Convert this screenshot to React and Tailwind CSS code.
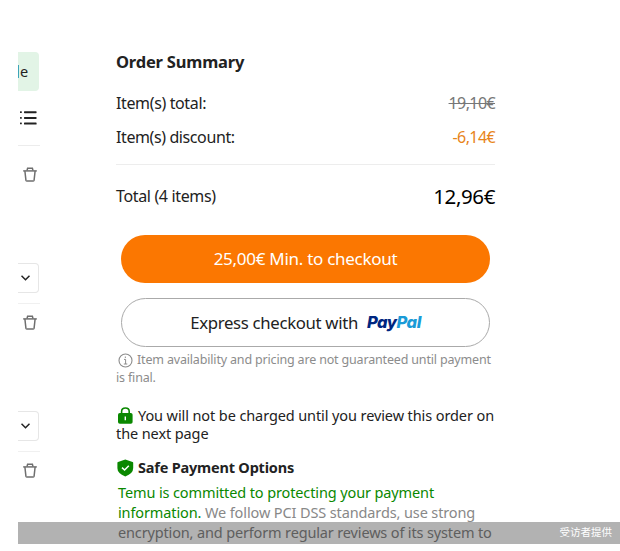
import React from 'react';

const cartRows = [
  { id: 1, gap: 'h-[81px]' },
  { id: 2, gap: 'h-[81px]' },
];

function TrashIcon() {
  return (
    <svg className="ml-[5px] block h-[15px] w-[14px]" viewBox="0 0 14 15" fill="none" stroke="#6f6f6f" strokeWidth="1.5">
      <path d="M0.2 3.9H13.8" />
      <path d="M4 3.6L4.6 1.2H9.4L10 3.6" />
      <path d="M1.9 4L2.9 13.2Q3 13.9 3.7 13.9H10.3Q11 13.9 11.1 13.2L12.1 4" />
    </svg>
  );
}

function ListIcon() {
  return (
    <svg className="ml-[2px] block h-[14px] w-[17px]" viewBox="0 0 17 14" fill="#222">
      {[0.2, 5.9, 11.5].map((y) => (
        <g key={y}>
          <rect x="0" y={y} width="1.8" height="1.8" rx="0.5" />
          <rect x="4" y={y} width="12.6" height="2" rx="0.6" />
        </g>
      ))}
    </svg>
  );
}

function QuantitySelect() {
  return (
    <div className="flex h-[30px] w-[21px] items-center rounded-r-[4px] border border-l-0 border-[#e6e6e6] pl-[3px]">
      <svg className="h-[6px] w-[9px]" viewBox="0 0 9 6" fill="none" stroke="#222" strokeWidth="1.5">
        <path d="M0.5 0.7L4.5 4.7L8.5 0.7" />
      </svg>
    </div>
  );
}

function CartEdge() {
  return (
    <div className="flex w-[22px] flex-col overflow-hidden pt-[52px]">
      <div className="flex h-[39px] w-[21px] items-center rounded-r-[4px] bg-[#e2f4e6] text-[14.5px] text-[#222]">
        <span className="h-[13px] w-[1px] bg-[#3da5b8]" />
        <span className="ml-[1px]">e</span>
      </div>
      <div className="h-[20px]" />
      <ListIcon />
      <div className="mt-[20px] h-px bg-[#ececec]" />
      <div className="h-[21px]" />
      <TrashIcon />
      {cartRows.map((row) => (
        <div key={row.id}>
          <div className={row.gap} />
          <QuantitySelect />
          <div className="mt-[10px] mb-[11px] h-px bg-[#f0f0f0]" />
          <TrashIcon />
        </div>
      ))}
    </div>
  );
}

function InfoIcon() {
  return (
    <svg className="mr-[4px] ml-[2px] h-[15px] w-[15px] shrink-0" viewBox="0 0 15 15" fill="none" stroke="#8c8c8c">
      <circle cx="7.5" cy="7.5" r="6.5" strokeWidth="1.1" />
      <path d="M6 6.4H7.6V11M5.8 11H9.3" strokeWidth="1" />
      <rect x="6.8" y="3.6" width="1.2" height="1.2" fill="#8c8c8c" stroke="none" />
    </svg>
  );
}

function LockIcon() {
  return (
    <svg className="mr-[5px] ml-[2px] h-[17px] w-[15px] shrink-0" viewBox="0 0 15 17">
      <path d="M3.6 7V4.4Q3.6 1 7.4 1Q11.2 1 11.2 4.4V7" fill="none" stroke="#0a8800" strokeWidth="1.6" />
      <rect x="0" y="6" width="14.6" height="10.8" rx="1.8" fill="#0a8800" />
      <path d="M7.3 9.6V13.2" stroke="#fff" strokeWidth="1.4" />
    </svg>
  );
}

function ShieldIcon() {
  return (
    <svg className="mr-[4px] ml-[1px] h-[18px] w-[17px] shrink-0" viewBox="0 0 17 18">
      <path d="M8.3 0.6L15.6 3Q16.2 3.2 16.2 3.9V9Q16.2 14.5 8.3 17.4Q0.4 14.5 0.4 9V3.9Q0.4 3.2 1 3Z" fill="#0a8800" />
      <path d="M5 8.6L7.6 11L11.8 6.8" fill="none" stroke="#fff" strokeWidth="1.5" />
    </svg>
  );
}

function PayPalLogo() {
  return (
    <span className="ml-[9px] font-['Inter'] text-[16.5px] font-extrabold italic tracking-[-0.5px] text-[#00267f] [font-feature-settings:'cv11']">
      Pay<span className="text-[#1a9bd7]">Pal</span>
    </span>
  );
}

function OrderSummary() {
  return (
    <div className="ml-[76px] flex w-[379px] flex-col pt-[50px] whitespace-nowrap text-[#222]">
      <h1 className="h-[24px] text-[16.5px] leading-[24px] font-bold tracking-[-0.2px]">Order Summary</h1>
      <div className="mt-[17px] flex h-[24px] items-center justify-between text-[16px] tracking-[-0.37px]">
        <span>Item(s) total:</span>
        <span className="tracking-[-0.6px] text-[#777] line-through">19,10€</span>
      </div>
      <div className="mt-[10px] flex h-[24px] items-center justify-between text-[16px] tracking-[-0.4px]">
        <span>Item(s) discount:</span>
        <span className="tracking-[-0.6px] text-[#e8851a]">-6,14€</span>
      </div>
      <div className="mt-[15px] h-px bg-[#ededed]" />
      <div className="mt-[16px] flex h-[30px] items-center justify-between">
        <span className="text-[16px] tracking-[-0.35px]">Total (4 items)</span>
        <span className="text-[20.5px] tracking-[-0.4px] text-black">12,96€</span>
      </div>
      <button className="mt-[24px] ml-[5px] h-[48px] w-[369px] rounded-full bg-[#fb7701] text-[17px] tracking-[-0.28px] text-white">
        25,00€ Min. to checkout
      </button>
      <button className="mt-[15px] ml-[5px] flex h-[49px] w-[369px] items-center justify-center rounded-full border border-[#aaa] text-[16.75px] tracking-[-0.32px]">
        <span>Express checkout with</span>
        <PayPalLogo />
      </button>
      <div className="mt-[4px] text-[12.5px] leading-[18px] tracking-[-0.17px] text-[#8c8c8c]">
        <div className="flex items-center">
          <InfoIcon />
          <span>Item availability and pricing are not guaranteed until payment</span>
        </div>
        <div>is final.</div>
      </div>
      <div className="mt-[19px] text-[14.5px] leading-[18px] tracking-[-0.1px]">
        <div className="flex items-center">
          <LockIcon />
          <span>You will not be charged until you review this order on</span>
        </div>
        <div>the next page</div>
      </div>
      <div className="mt-[17px] flex h-[18px] items-center text-[14.5px] font-bold tracking-[-0.2px]">
        <ShieldIcon />
        <span>Safe Payment Options</span>
      </div>
      <div className="mt-[5px] ml-[2px] text-[14.5px] leading-[20px] tracking-[-0.12px] text-[#888]">
        <div className="text-[#0a8800]">Temu is committed to protecting your payment</div>
        <div>
          <span className="text-[#0a8800]">information.</span> <span>We follow PCI DSS standards, use strong</span>
        </div>
        <div className="tracking-[-0.15px]">encryption, and perform regular reviews of its system to</div>
      </div>
    </div>
  );
}

function App() {
  return (
    <div className="relative flex h-[551px] w-[620px] overflow-hidden bg-white pl-[18px] font-['Noto_Sans','Noto_Sans_CJK_SC',sans-serif]">
      <CartEdge />
      <OrderSummary />
      <div className="absolute top-[522px] right-0 left-[18px] flex h-[22px] items-center justify-end bg-black/30 pr-[8px] text-[10.5px] text-white">
        受访者提供
      </div>
      {/* page ends at the caption bar */}
      <div className="absolute top-[544px] right-0 left-0 h-[7px] bg-white" />
    </div>
  );
}

export default App;
